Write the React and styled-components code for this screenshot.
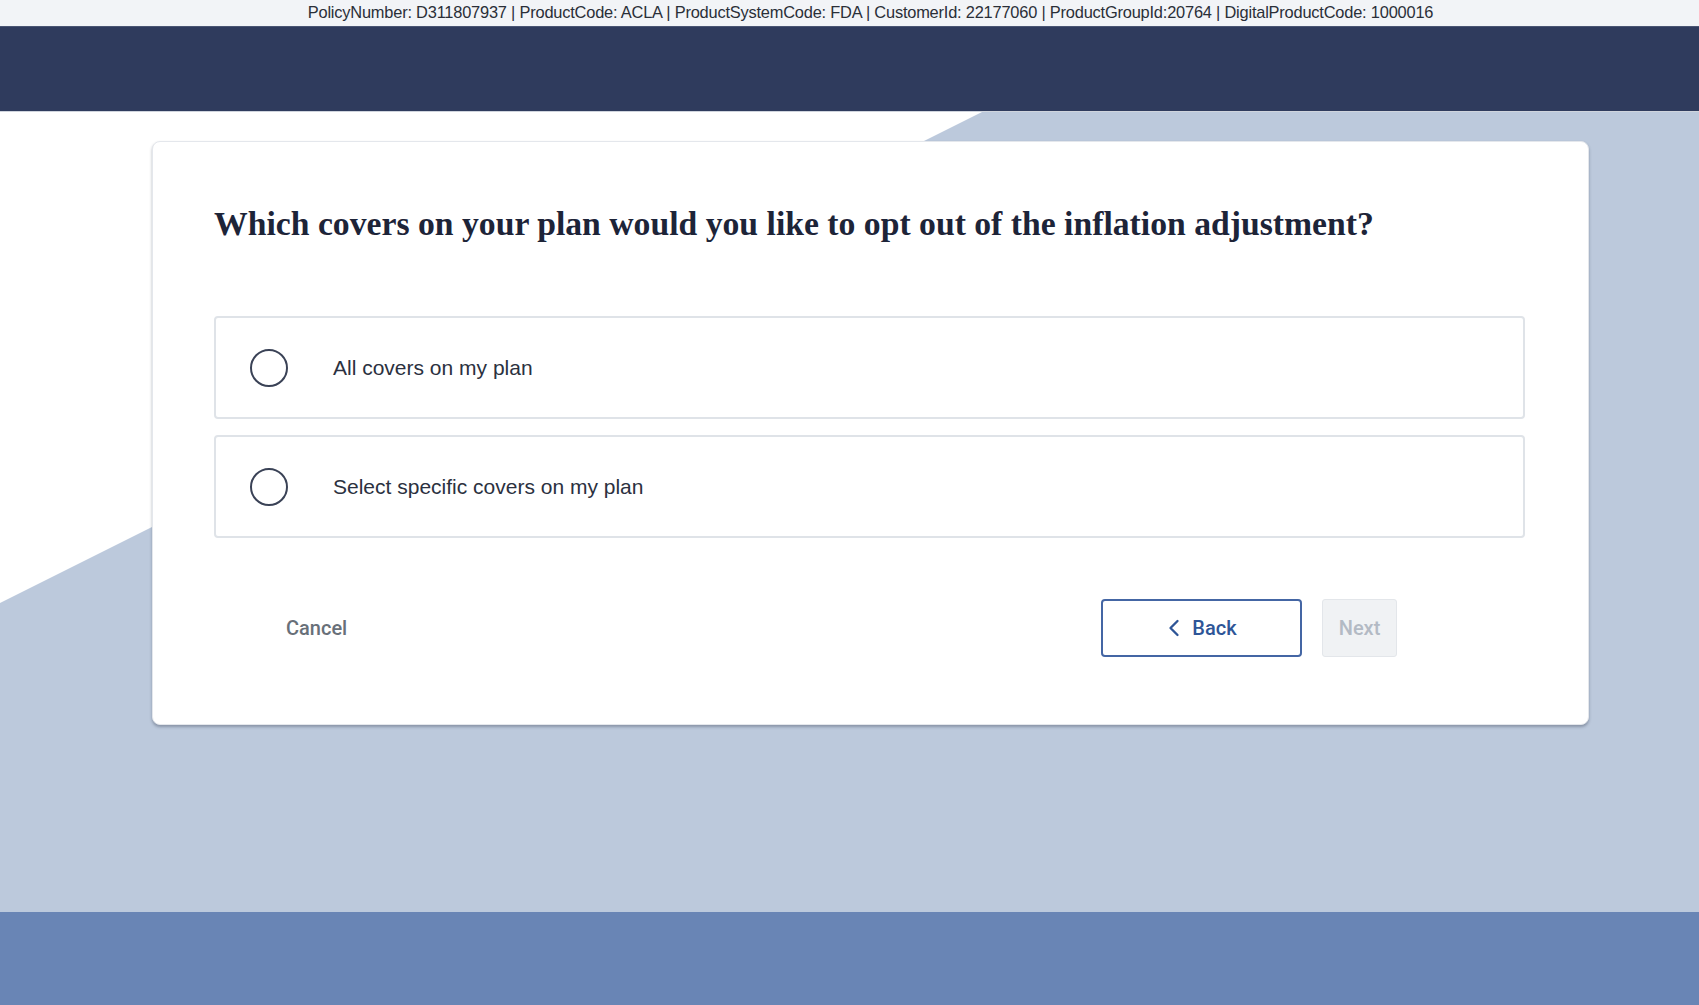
import React, { useState } from 'react';
import styled, { createGlobalStyle } from 'styled-components';
import { ChevronLeft } from 'lucide-react';

const GlobalStyle = createGlobalStyle`
  html, body {
    margin: 0;
    padding: 0;
    background: #6985b5;
  }
  * {
    box-sizing: border-box;
  }
`;

const options = [
  { key: 'all', label: 'All covers on my plan' },
  { key: 'specific', label: 'Select specific covers on my plan' }
];

export default function App() {
  const [selected, setSelected] = useState(null);

  return (
    <>
      <GlobalStyle />
      <InfoBar>
        PolicyNumber: D311807937 | ProductCode: ACLA | ProductSystemCode: FDA |
        CustomerId: 22177060 | ProductGroupId:20764 | DigitalProductCode: 1000016
      </InfoBar>
      <Header />
      <Main>
        <Card>
          <Question>
            Which covers on your plan would you like to opt out of the inflation
            adjustment?
          </Question>
          <OptionList>
            {options.map(option => (
              <OptionRow
                key={option.key}
                onClick={() => setSelected(option.key)}
              >
                <Radio checked={selected === option.key} />
                <OptionLabel>{option.label}</OptionLabel>
              </OptionRow>
            ))}
          </OptionList>
          <Actions>
            <CancelButton>Cancel</CancelButton>
            <BackButton>
              <ChevronLeft size={28} strokeWidth={2} />
              <span>Back</span>
            </BackButton>
            <NextButton disabled={!selected}>Next</NextButton>
          </Actions>
        </Card>
      </Main>
      <Footer />
    </>
  );
}

const InfoBar = styled.div`
  height: 26px;
  padding-left: 42px;
  background: #f2f4f7;
  color: #2a2f38;
  font-family: 'Liberation Sans', sans-serif;
  font-size: 16.4px;
  line-height: 24px;
  text-align: center;
  white-space: nowrap;
  letter-spacing: -0.2px;
`;

const Header = styled.div`
  height: 86px;
  background: #2f3b5d;
  border-top: 1px solid #4a5573;
  border-bottom: 1px solid #cfd4dd;
`;

const Main = styled.main`
  position: relative;
  height: 800px;
  padding: 29px 0 0 152px;
  background: #bcc9dc;

  &::before {
    content: '';
    position: absolute;
    inset: 0;
    background: #ffffff;
    clip-path: polygon(0 0, 982px 0, 0 491px);
  }
`;

const Card = styled.section`
  position: relative;
  width: 1437px;
  padding: 62px 63px 67px 61px;
  background: #ffffff;
  border: 1px solid #e4e7ec;
  border-radius: 8px;
  box-shadow: 0 2px 3px rgba(40, 50, 70, 0.35);
`;

const Question = styled.h1`
  margin: 0 0 72px;
  color: #1d2438;
  font-family: 'Liberation Serif', 'DejaVu Serif', serif;
  font-size: 33.7px;
  font-weight: 700;
  line-height: 40px;
`;

const OptionList = styled.div`
  display: flex;
  flex-direction: column;
  gap: 16px;
`;

const OptionRow = styled.label`
  display: flex;
  align-items: center;
  height: 103px;
  padding-left: 34px;
  border: 2px solid #dfe3e8;
  border-radius: 4px;
  cursor: pointer;
`;

const Radio = styled.span`
  flex: none;
  width: 38px;
  height: 38px;
  border: 2px solid #3a4256;
  border-radius: 50%;
  background: ${props =>
    props.checked ? 'radial-gradient(#2f4d8a 0 9px, transparent 10px)' : 'none'};
`;

const OptionLabel = styled.span`
  margin-left: 45px;
  color: #2b3140;
  font-family: 'Liberation Sans', sans-serif;
  font-size: 21px;
`;

const Actions = styled.div`
  display: flex;
  align-items: center;
  margin-top: 61px;
  padding: 0 128px 0 72px;
`;

const CancelButton = styled.button`
  margin-right: auto;
  padding: 0;
  border: none;
  background: none;
  color: #687079;
  font-family: Roboto, 'Liberation Sans', sans-serif;
  font-size: 20px;
  font-weight: 500;
  cursor: pointer;
`;

const BackButton = styled.button`
  display: flex;
  align-items: center;
  justify-content: center;
  gap: 4px;
  width: 201px;
  height: 58px;
  padding: 0 6px 0 0;
  border: 2px solid #4466a4;
  border-radius: 4px;
  background: #ffffff;
  color: #2e5597;
  font-family: Roboto, 'Liberation Sans', sans-serif;
  font-size: 20px;
  font-weight: 500;
  cursor: pointer;
`;

const NextButton = styled.button`
  width: 75px;
  height: 58px;
  margin-left: 20px;
  padding: 0;
  border: 1px solid #e3e6ea;
  border-radius: 3px;
  background: #f0f2f4;
  color: #b3bac4;
  font-family: Roboto, 'Liberation Sans', sans-serif;
  font-size: 20px;
  font-weight: 500;
`;

const Footer = styled.footer`
  height: 93px;
  background: #6985b5;
`;
